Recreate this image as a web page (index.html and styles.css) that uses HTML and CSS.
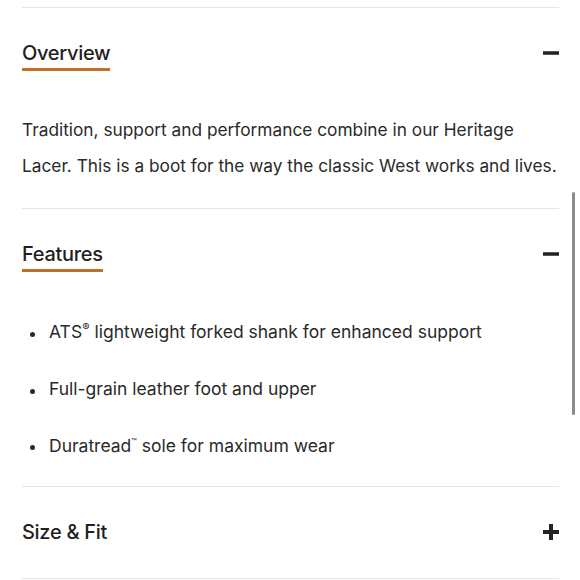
FILE: index.html
```html
<!DOCTYPE html>
<html lang="en">
<head>
    <meta charset="UTF-8">
    <title>Heritage Lacer - Product details</title>
    <meta name="viewport" content="width=device-width, initial-scale=1.0">
    <link rel="stylesheet" href="styles.css">
</head>
<body>
    <div class="accordion">
        <section class="item open">
            <div class="item-head">
                <h2 class="item-title">Overview</h2>
                <svg class="toggle" width="16" height="16" viewBox="0 0 16 16"><rect x="0" y="6.25" width="16" height="3.5" fill="#222"/></svg>
            </div>
            <div class="item-body">
                <p class="lead">Tradition, support and performance combine in our Heritage Lacer. This is a boot for the way the classic West works and lives.</p>
            </div>
        </section>

        <section class="item open">
            <div class="item-head">
                <h2 class="item-title">Features</h2>
                <svg class="toggle" width="16" height="16" viewBox="0 0 16 16"><rect x="0" y="6.25" width="16" height="3.5" fill="#222"/></svg>
            </div>
            <div class="item-body">
                <ul class="features">
                    <li>ATS<sup>®</sup> lightweight forked shank for enhanced support</li>
                    <li>Full-grain leather foot and upper</li>
                    <li>Duratread<sup class="tm">™</sup> sole for maximum wear</li>
                </ul>
            </div>
        </section>

        <section class="item">
            <div class="item-head">
                <h2 class="item-title">Size &amp; Fit</h2>
                <svg class="toggle" width="16" height="16" viewBox="0 0 16 16"><rect x="0" y="6" width="16" height="4" fill="#222"/><rect x="6" y="0" width="4" height="16" fill="#222"/></svg>
            </div>
        </section>
    </div>

    <!-- barra de rolagem do navegador -->
    <div class="scrollbar"></div>
</body>
</html>
```

FILE: styles.css
```css
body { margin: 0; font-family: Inter, Lato, 'Liberation Sans', sans-serif; background: #fff; color: #2a2a2a; }
.accordion { padding: 7px 21px 0 22px; }
.item { border-top: 1px solid #e6e6e6; }
.item:last-child { border-bottom: 1px solid #e6e6e6; padding-bottom: 28px; }
.item-head { display: flex; justify-content: space-between; align-items: flex-start; padding-top: 33px; }
.item-title {
    margin: 0;
    font-size: 20px;
    line-height: 24px;
    font-weight: 500;
    letter-spacing: -0.3px;
    color: #1f1f1f;
    padding-bottom: 3px;
    border-bottom: 3px solid transparent;
}
.open .item-title { border-bottom-color: #c0702a; }
.toggle { margin-top: 4px; }

.item-body { padding-bottom: 24px; }
.lead { margin: 41px 0 0; font-size: 17.3px; line-height: 36px; }

.features { list-style: none; margin: 32px 0 0; padding: 0; }
.item-body:has(.features) { padding-bottom: 12px; }
.features li {
    position: relative;
    font-size: 17.5px;
    line-height: 26px;
    padding: 15.33px 0 15.33px 27px;
}
.features li::before {
    content: "";
    position: absolute;
    left: 8px;
    top: 28px;
    width: 5px;
    height: 5px;
    border-radius: 50%;
    background: #2a2a2a;
}
.features sup { font-size: 11px; line-height: 0; vertical-align: 7px; }
.features sup.tm { font-size: 9px; }

.scrollbar { position: absolute; left: 572px; top: 192px; width: 3px; height: 223px; border-radius: 2px; background: #8c8c8c; }
```
